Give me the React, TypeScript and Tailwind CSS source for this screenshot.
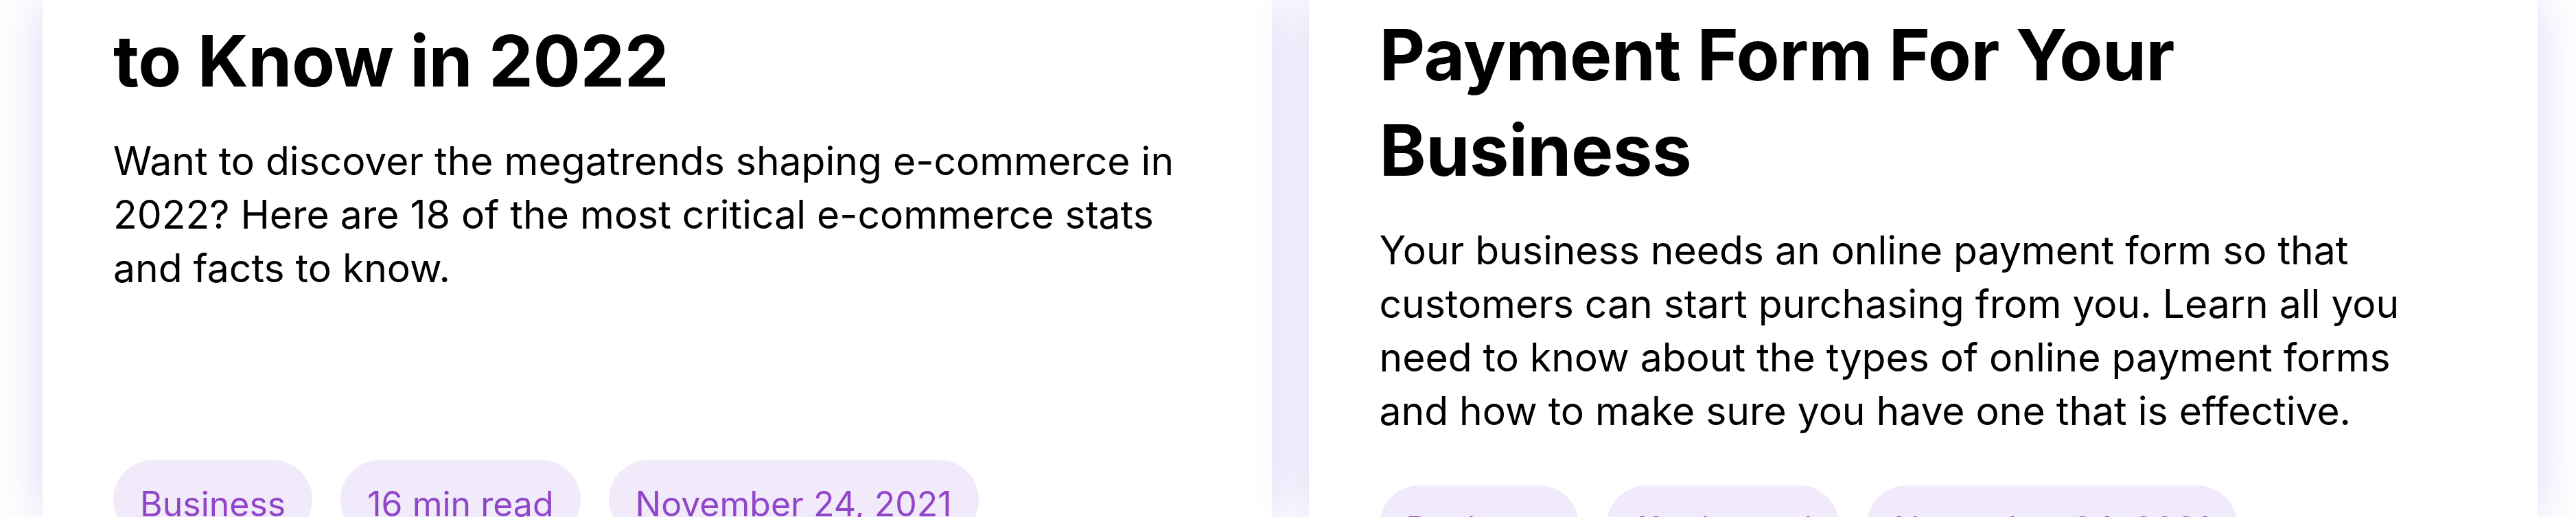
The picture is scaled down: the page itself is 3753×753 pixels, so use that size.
import React from "react";

interface Post {
    titleLines: string[];
    excerpt: string;
    category: string;
    readTime: string;
    date: string;
}

const posts: Post[] = [
    {
        titleLines: ["to Know in 2022"],
        excerpt: "Want to discover the megatrends shaping e-commerce in 2022? Here are 18 of the most critical e-commerce stats and facts to know.",
        category: "Business",
        readTime: "16 min read",
        date: "November 24, 2021",
    },
    {
        titleLines: ["Payment Form For Your", "Business"],
        excerpt: "Your business needs an online payment form so that customers can start purchasing from you. Learn all you need to know about the types of online payment forms and how to make sure you have one that is effective.",
        category: "Business",
        readTime: "11 min read",
        date: "November 24, 2021",
    },
];

const Tag: React.FC<{ label: string }> = ({ label }) => (
    <span className="rounded-full bg-[#f0eafb] px-[39px] pt-[26px] pb-[12px] text-[50px] leading-[77px] text-[#9145c8] whitespace-nowrap">
        {label}
    </span>
);

const PostCard: React.FC<{ post: Post; top: string; tagGap: string }> = ({ post, top, tagGap }) => (
    <div className={`flex-1 bg-white px-[103px] shadow-[0_0_70px_rgba(130,110,225,0.28)] ${top}`}>
        <h2 className="text-[103px] font-bold leading-[139px] tracking-[-0.5px] text-black">
            {post.titleLines.map((line, i) => (
                <span key={i} className="block">{line}</span>
            ))}
        </h2>
        <p className="mt-[38px] text-[57px] leading-[78px] text-black">{post.excerpt}</p>
        <div className={`flex gap-[41px] ${tagGap}`}>
            <Tag label={post.category} />
            <Tag label={post.readTime} />
            <Tag label={post.date} />
        </div>
    </div>
);

export default function App() {
    return (
        <div className="flex h-[753px] w-[3753px] gap-[54px] overflow-hidden bg-white pl-[62px] pr-[56px] font-['Inter',sans-serif]">
            <PostCard post={posts[0]} top="pt-[19px]" tagGap="mt-[240px]" />
            <PostCard post={posts[1]} top="pt-[10px]" tagGap="mt-[69px]" />
        </div>
    );
}
